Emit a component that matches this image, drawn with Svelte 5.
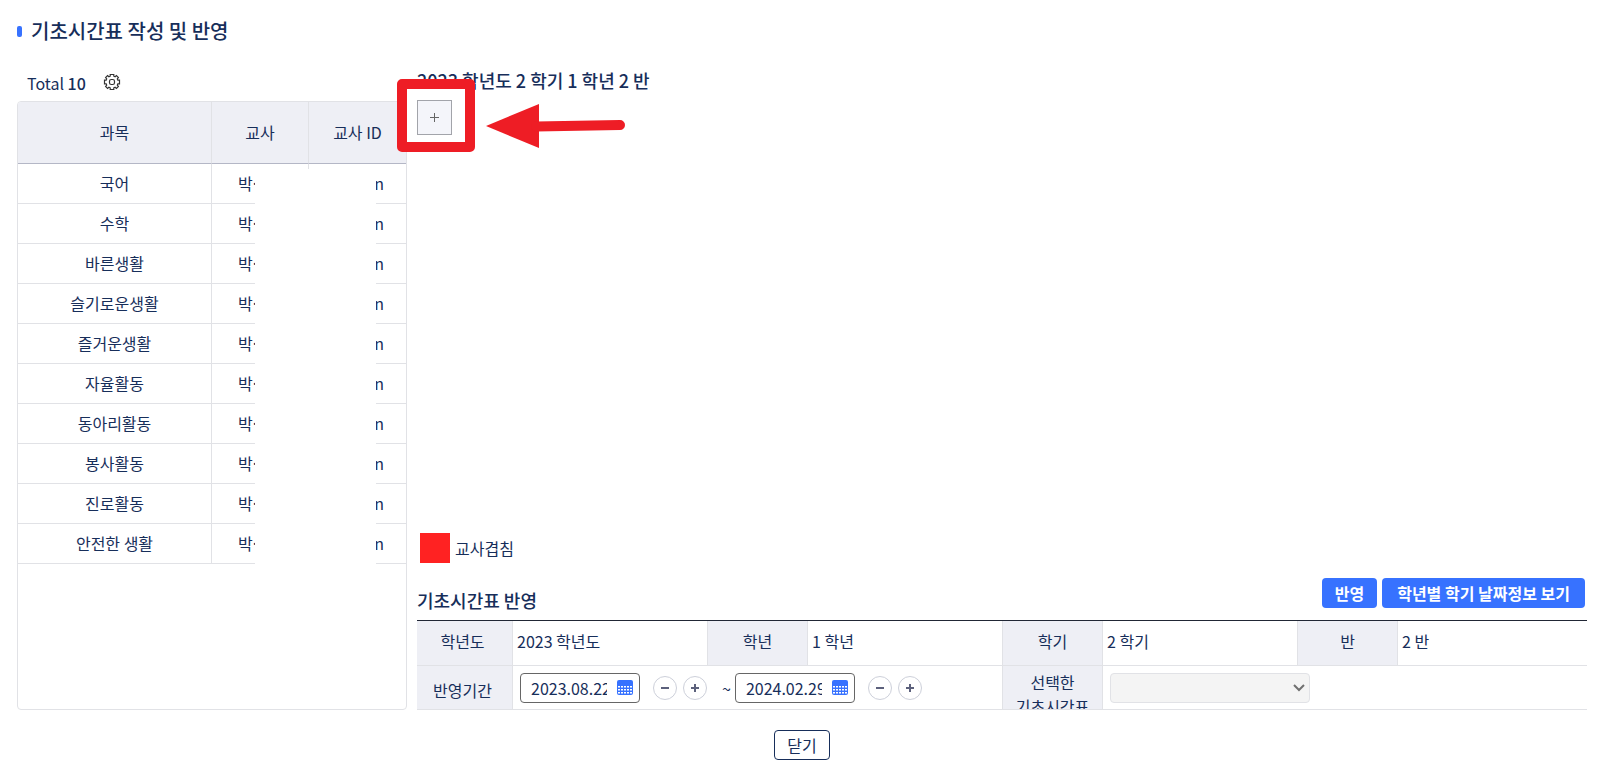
<script>
  const subjects = [
    "국어",
    "수학",
    "바른생활",
    "슬기로운생활",
    "즐거운생활",
    "자율활동",
    "동아리활동",
    "봉사활동",
    "진로활동",
    "안전한 생활",
  ];

  let startDate = $state("2023.08.22");
  let endDate = $state("2024.02.29");
</script>

{#snippet calendar()}
  <button class="calendar" type="button" aria-label="달력">
    <svg width="16" height="15" viewBox="0 0 16 15">
      <rect width="16" height="15" rx="2" fill="#3772ff" />
      <path
        d="M1 6h2v1.500h-2zM4 6h2v1.500h-2zM7 6h2v1.500h-2zM10 6h2v1.500h-2zM13 6h2v1.500h-2zM1 9h2v1.500h-2zM4 9h2v1.500h-2zM7 9h2v1.500h-2zM10 9h2v1.500h-2zM13 9h2v1.500h-2zM1 12h2v1.500h-2zM4 12h2v1.500h-2zM7 12h2v1.500h-2zM10 12h2v1.500h-2zM13 12h2v1.500h-2z"
        fill="#fff"
      />
    </svg>
  </button>
{/snippet}

{#snippet steppers()}
  <span class="steppers">
    <button type="button" aria-label="하루 빼기">
      <svg width="10" height="10" viewBox="0 0 10 10">
        <path d="M1 5h8" stroke="#5c617c" stroke-width="2" />
      </svg>
    </button>
    <button type="button" aria-label="하루 더하기">
      <svg width="10" height="10" viewBox="0 0 10 10">
        <path d="M1 5h8M5 1v8" stroke="#5c617c" stroke-width="2" />
      </svg>
    </button>
  </span>
{/snippet}

<main>
  <h1>기초시간표 작성 및 반영</h1>

  <div class="columns">
    <section class="subjects">
      <div class="total">
        <span>Total <strong>10</strong></span>
        <button type="button" aria-label="설정">
          <svg width="18" height="18" viewBox="0 0 18 18" fill="none" stroke="#333" stroke-width="1.2">
            <path
              d="M7.200 1.500h3.600v1.700l1.300.5 1.300-1.100 2 2-1.100 1.300.5 1.300h1.700v3.600h-1.700l-.5 1.300 1.100 1.300-2 2-1.300-1.100-1.300.5v1.700h-3.600v-1.700l-1.300-.5-1.300 1.100-2-2 1.100-1.300-.5-1.300h-1.700v-3.600h1.700l.5-1.300-1.100-1.300 2-2 1.300 1.100 1.300-.5z"
            />
            <rect x="6.500" y="6.500" width="5" height="5" rx="1.800" />
          </svg>
        </button>
      </div>

      <div class="grid">
        <table>
          <colgroup>
            <col class="subject" />
            <col class="teacher" />
            <col />
          </colgroup>
          <thead>
            <tr>
              <th>과목</th>
              <th>교사</th>
              <th>교사 ID</th>
            </tr>
          </thead>
          <tbody>
            {#each subjects as subject}
              <tr>
                <td>{subject}</td>
                <td class="name">박·</td>
                <td class="id">n</td>
              </tr>
            {/each}
          </tbody>
        </table>
        <div class="mask"></div>
      </div>
    </section>

    <section class="timetable">
      <h2>2023 학년도 2 학기 1 학년 2 반</h2>
      <div class="add">
        <button type="button" aria-label="추가">
          <svg width="9" height="9" viewBox="0 0 9 9">
            <path d="M0 4.500h9M4.500 0v9" stroke="#666" />
          </svg>
        </button>
        <span class="frame"></span>
        <svg class="arrow" width="140" height="44" viewBox="0 0 140 44">
          <path d="M0 22 53 0v44z" fill="#ee1d25" />
          <path d="M50 22.500 134 21" stroke="#ee1d25" stroke-width="10" stroke-linecap="round" />
        </svg>
      </div>

      <div class="legend"><span></span>교사겹침</div>

      <div class="heading">
        <h2>기초시간표 반영</h2>
        <div class="actions">
          <button type="button">반영</button>
          <button class="wide" type="button">학년별 학기 날짜정보 보기</button>
        </div>
      </div>

      <table class="form">
        <colgroup>
          <col class="first" />
          <col class="value" />
          <col class="label" />
          <col class="value" />
          <col class="label" />
          <col class="value" />
          <col class="label" />
          <col />
        </colgroup>
        <tbody>
          <tr class="info">
            <th>학년도</th>
            <td>2023 학년도</td>
            <th>학년</th>
            <td>1 학년</td>
            <th>학기</th>
            <td>2 학기</td>
            <th>반</th>
            <td>2 반</td>
          </tr>
          <tr>
            <th><div class="period">반영기간</div></th>
            <td colspan="3">
              <div class="range">
                <span class="date">
                  <input type="text" aria-label="시작일" bind:value={startDate} />
                  {@render calendar()}
                </span>
                {@render steppers()}
                <span class="tilde">~</span>
                <span class="date">
                  <input type="text" aria-label="종료일" bind:value={endDate} />
                  {@render calendar()}
                </span>
                {@render steppers()}
              </div>
            </td>
            <th><label class="selected" for="selected">선택한 기초시간표</label></th>
            <td colspan="3">
              <div class="select">
                <select id="selected" disabled></select>
                <svg width="12" height="8" viewBox="0 0 12 8">
                  <path d="M1 1l5 5 5-5" fill="none" stroke="#707070" stroke-width="2" />
                </svg>
              </div>
            </td>
          </tr>
        </tbody>
      </table>
    </section>
  </div>

  <footer>
    <button type="button">닫기</button>
  </footer>
</main>

<style>
  :global(body) {
    margin: 0;
    background: #fff;
  }

  main {
    box-sizing: border-box;
    padding: 16px 18px 20px 17px;
    color: #172e5a;
    font-family: "Noto Sans CJK KR", "Noto Sans", sans-serif;
    font-size: 16px;
    line-height: 24px;
  }

  button,
  input,
  select {
    box-sizing: border-box;
    margin: 0;
    padding: 0;
    border: 0;
    background: none;
    color: inherit;
    font: inherit;
  }

  h1,
  h2 {
    margin: 0;
    font-weight: 500;
  }

  h1 {
    display: flex;
    align-items: center;
    gap: 9px;
    font-size: 20px;
    line-height: 30px;
  }

  h1::before {
    content: "";
    width: 5px;
    height: 11px;
    border-radius: 2px;
    background: #3772ff;
  }

  h2 {
    font-size: 18px;
    line-height: 24px;
  }

  table {
    width: 100%;
    border-collapse: separate;
    border-spacing: 0;
    table-layout: fixed;
  }

  th,
  td {
    box-sizing: border-box;
    padding: 0;
    font-weight: 400;
  }

  .columns {
    display: flex;
    gap: 10px;
    min-height: 642px;
    margin-top: 22px;
  }

  .subjects {
    display: flex;
    flex: 0 0 390px;
    flex-direction: column;
  }

  .total {
    display: flex;
    gap: 17px;
    box-sizing: border-box;
    height: 30px;
    margin-bottom: 3px;
    padding: 3px 10px 0;
  }

  .total strong {
    font-weight: 500;
  }

  .total button {
    width: 18px;
    height: 20px;
  }

  .total svg {
    display: block;
    margin-top: 1px;
  }

  .grid {
    position: relative;
    flex: 1;
    border: 1px solid #e1e2e6;
    border-radius: 4px;
    overflow: hidden;
  }

  .subject {
    width: 194px;
  }

  .teacher {
    width: 97px;
  }

  .grid th,
  .grid td {
    padding-bottom: 2px;
    border-right: 1px solid #e1e2e6;
    border-bottom: 1px solid #e1e2e6;
    text-align: center;
  }

  .grid th {
    height: 62px;
    border-bottom-color: #b4b7c6;
    background: #eeeff5;
  }

  .grid td {
    height: 40px;
  }

  .grid th:last-child,
  .grid td:last-child {
    border-right: 0;
  }

  .grid .name {
    padding-bottom: 0;
    padding-left: 26px;
    font-family: "Noto Sans", "Noto Sans CJK KR", sans-serif;
    text-align: left;
  }

  .grid .id {
    padding-right: 22px;
    text-align: right;
  }

  .mask {
    position: absolute;
    top: 67px;
    left: 237px;
    width: 121px;
    height: 396px;
    background: #fff;
  }

  .timetable {
    display: flex;
    flex: 1;
    flex-direction: column;
    min-width: 0;
  }

  .add {
    position: relative;
    width: 35px;
    margin-top: 8px;
  }

  .add button {
    display: grid;
    place-items: center;
    width: 35px;
    height: 35px;
    border: 1px solid #a2a4aa;
    background: #f4f5fa;
  }

  .frame {
    position: absolute;
    top: -21px;
    left: -20px;
    box-sizing: border-box;
    width: 78px;
    height: 73px;
    border: 10px solid #ee1d25;
    border-radius: 5px;
    pointer-events: none;
  }

  .arrow {
    position: absolute;
    top: 4px;
    left: 69px;
  }

  .legend {
    display: flex;
    align-items: center;
    gap: 5px;
    margin-top: auto;
    padding-left: 3px;
  }

  .legend span {
    width: 30px;
    height: 30px;
    background: #ff2222;
  }

  .heading {
    display: flex;
    align-items: flex-end;
    justify-content: space-between;
    height: 51px;
    margin-top: 6px;
  }

  .heading h2 {
    padding-bottom: 8px;
  }

  .actions {
    display: flex;
    gap: 5px;
    padding: 0 2px 12px 0;
  }

  .actions button {
    height: 30px;
    padding: 0 13px;
    border-radius: 4px;
    background: #3772ff;
    color: #fff;
    font-weight: 700;
  }

  .actions .wide {
    padding: 0 15px;
  }

  .form {
    border-top: 1px solid #212735;
  }

  .first {
    width: 96px;
  }

  .label {
    width: 100px;
  }

  .value {
    width: 195px;
  }

  .form th,
  .form td {
    height: 44px;
    border-right: 1px solid #e1e2e6;
    border-bottom: 1px solid #e1e2e6;
  }

  .form .info th,
  .form .info td {
    height: 45px;
    padding-bottom: 5px;
  }

  .form th {
    background: #eeeff5;
    text-align: center;
  }

  .form th:first-child {
    padding-right: 4px;
  }

  .form td {
    padding-left: 4px;
  }

  .form td:last-child {
    border-right: 0;
  }

  .period,
  .selected {
    display: block;
    box-sizing: border-box;
    height: 43px;
    overflow: hidden;
  }

  .period {
    padding-top: 12px;
  }

  .selected {
    padding: 4px 10px 0;
    word-break: keep-all;
  }

  .range {
    display: flex;
    align-items: center;
    padding-left: 3px;
  }

  .date {
    display: flex;
    align-items: center;
    gap: 10px;
    box-sizing: border-box;
    width: 120px;
    height: 30px;
    padding: 0 6px 0 10px;
    border: 1px solid #666;
    border-radius: 4px;
    background: #fff;
  }

  .date input {
    width: 76px;
    height: 28px;
  }

  .calendar {
    width: 16px;
    height: 17px;
  }

  .calendar svg {
    display: block;
  }

  .steppers {
    display: flex;
    gap: 6px;
    margin-left: 13px;
  }

  .steppers button {
    display: grid;
    place-items: center;
    width: 24px;
    height: 24px;
    border: 1px solid #cdd0da;
    border-radius: 50%;
  }

  .tilde {
    padding: 0 4px 0 15px;
  }

  .select {
    position: relative;
    width: 200px;
    margin-left: 3px;
  }

  .select select {
    display: block;
    width: 200px;
    height: 30px;
    border: 1px solid #e1e2e6;
    border-radius: 4px;
    appearance: none;
    background: #f4f4f4;
    opacity: 1;
  }

  .select svg {
    position: absolute;
    top: 11px;
    right: 5px;
    pointer-events: none;
  }

  footer {
    display: flex;
    justify-content: center;
    padding-top: 20px;
  }

  footer button {
    width: 56px;
    height: 30px;
    border: 1px solid #172e5a;
    border-radius: 4px;
    background: #fff;
  }
</style>
